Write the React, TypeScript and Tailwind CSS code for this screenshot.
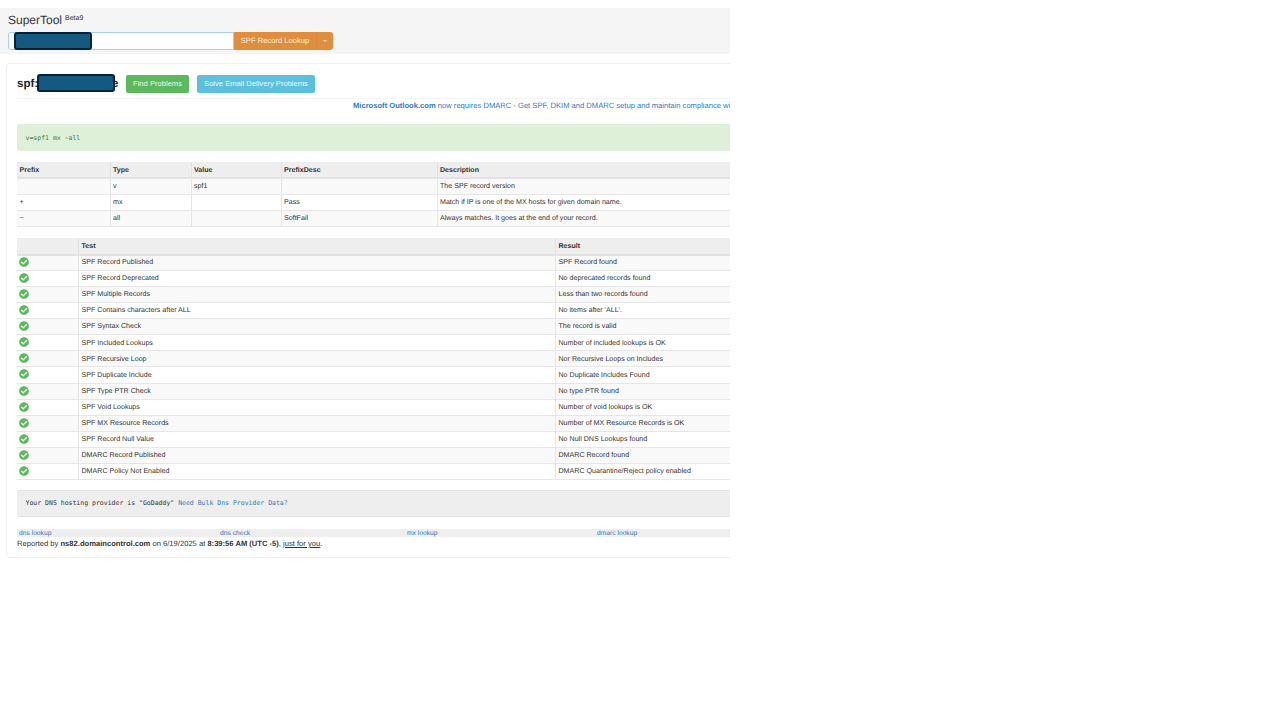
import { FaCheckCircle } from 'react-icons/fa'

const prefixRows = [
  { prefix: '', type: 'v', value: 'spf1', desc: '', description: 'The SPF record version' },
  { prefix: '+', type: 'mx', value: '', desc: 'Pass', description: 'Match if IP is one of the MX hosts for given domain name.' },
  { prefix: '~', type: 'all', value: '', desc: 'SoftFail', description: 'Always matches. It goes at the end of your record.' },
]

const tests = [
  ['SPF Record Published', 'SPF Record found'],
  ['SPF Record Deprecated', 'No deprecated records found'],
  ['SPF Multiple Records', 'Less than two records found'],
  ['SPF Contains characters after ALL', "No items after 'ALL'."],
  ['SPF Syntax Check', 'The record is valid'],
  ['SPF Included Lookups', 'Number of included lookups is OK'],
  ['SPF Recursive Loop', 'Nor Recursive Loops on Includes'],
  ['SPF Duplicate Include', 'No Duplicate Includes Found'],
  ['SPF Type PTR Check', 'No type PTR found'],
  ['SPF Void Lookups', 'Number of void lookups is OK'],
  ['SPF MX Resource Records', 'Number of MX Resource Records is OK'],
  ['SPF Record Null Value', 'No Null DNS Lookups found'],
  ['DMARC Record Published', 'DMARC Record found'],
  ['DMARC Policy Not Enabled', 'DMARC Quarantine/Reject policy enabled'],
]

function Redaction({ className }: { className: string }) {
  return <div className={`absolute h-[18px] w-[78px] rounded-[3px] border-2 border-[#04213a] bg-[#14597f] ${className}`} />
}

export default function App() {
  return (
    <div className="h-[720px] w-[1280px] overflow-hidden bg-white pt-2 font-['Liberation_Sans',Arial,sans-serif] text-[7.6px] text-[#333] opacity-[0.999] [text-rendering:geometricPrecision]">
      <div className="w-[730px] overflow-hidden">
        <header className="h-[46px] bg-[#f5f5f5] pl-2 pt-[3px]">
          <div className="flex h-[21px] items-start">
            <span className="text-[12px] leading-[18px] text-[#333]">SuperTool</span>
            <span className="ml-[3px] mt-[2px] text-[7px] leading-[12px]">Beta9</span>
          </div>
          <div className="relative flex h-[18px] items-stretch">
            <div className="w-[226px] rounded-l-[3px] border border-[#a9cfeb] bg-white" />
            <div className="flex w-[82px] items-center justify-center bg-[#df8e3d] text-[7.6px] text-[#fbeee0]">SPF Record Lookup</div>
            <div className="flex w-[17px] items-center justify-center rounded-r-[3px] border-l border-[#d58a3e] bg-[#df8e3d]">
              <span className="h-0 w-0 border-x-[2px] border-t-[2px] border-x-transparent border-t-[#fbeee0]" />
            </div>
            <Redaction className="left-[6px] top-0" />
          </div>
        </header>

        <main className="mt-[9px] ml-[6px] h-[495px] w-[740px] rounded-[4px] border border-[#f0f0f0] pl-[10px] pr-0">
          <div className="relative flex h-[35px] w-[720px] items-start border-b border-[#f3f3f3] pt-[11px]">
            <h1 className="flex h-[18px] w-[109px] items-center pt-[1px] text-[11.5px] font-bold text-[#222]">
              spf:
              <span className="ml-[74px]">e</span>
            </h1>
            <button className="h-[18px] w-[63px] rounded-[2px] bg-[#5cb85c] text-[7.6px] text-[#eef8ee]">Find Problems</button>
            <button className="ml-[8px] h-[18px] w-[118px] rounded-[2px] bg-[#5bc0de] text-[7.6px] text-[#eef9fc]">Solve Email Delivery Problems</button>
            <Redaction className="left-[20px] top-[10px]" />
          </div>

          <div className="mt-[1px] h-[12px] w-[713px] overflow-hidden whitespace-nowrap pl-[336px] text-[7.6px] leading-[11px] text-[#337ab7]">
            <b>Microsoft Outlook.com</b> now requires DMARC - Get SPF, DKIM and DMARC setup and maintain compliance wi
          </div>

          <div className="mt-[12px] flex h-[27px] w-[720px] items-center rounded-l-[2px] bg-[#dff0d8] pl-[8.5px] pt-[2px] font-['DejaVu_Sans_Mono',monospace] text-[6.5px] text-[#3c763d]">
            v=spf1 mx ~all
          </div>

          <table className="mt-[11px] w-[760px] table-fixed border-collapse text-[7.1px]">
            <colgroup>
              <col className="w-[93px]" />
              <col className="w-[81px]" />
              <col className="w-[90px]" />
              <col className="w-[156px]" />
              <col />
            </colgroup>
            <thead>
              <tr className="h-[16px] border-b-2 border-[#e2e2e2] bg-[#eee] text-left font-bold">
                {['Prefix', 'Type', 'Value', 'PrefixDesc', 'Description'].map((h) => (
                  <th key={h} className="border-l border-[#e2e2e2] pl-[2.5px] pt-[1px] first:border-l-0">{h}</th>
                ))}
              </tr>
            </thead>
            <tbody>
              {prefixRows.map((r, i) => (
                <tr key={i} className={`h-[16px] border-b border-[#e6e6e6] ${i % 2 === 0 ? 'bg-[#f9f9f9]' : 'bg-white'}`}>
                  <td className="pl-[2.5px]">{r.prefix}</td>
                  <td className="border-l border-[#e6e6e6] pl-[2.5px]">{r.type}</td>
                  <td className="border-l border-[#e6e6e6] pl-[2.5px]">{r.value}</td>
                  <td className="border-l border-[#e6e6e6] pl-[2.5px]">{r.desc}</td>
                  <td className="border-l border-[#e6e6e6] pl-[2.5px]">{r.description}</td>
                </tr>
              ))}
            </tbody>
          </table>

          <table className="mt-[11px] w-[760px] table-fixed border-collapse text-[7.1px]">
            <colgroup>
              <col className="w-[61px]" />
              <col className="w-[477px]" />
              <col />
            </colgroup>
            <thead>
              <tr className="h-[17px] border-b-2 border-[#e2e2e2] bg-[#eee] text-left font-bold">
                <th />
                <th className="border-l border-[#e2e2e2] pl-[3px] pt-[1px]">Test</th>
                <th className="border-l border-[#e2e2e2] pl-[3px] pt-[1px]">Result</th>
              </tr>
            </thead>
            <tbody>
              {tests.map(([test, result], i) => (
                <tr key={test} className={`h-[16.07px] border-b border-[#e6e6e6] ${i % 2 === 0 ? 'bg-[#f9f9f9]' : 'bg-white'}`}>
                  <td className="pl-[2px] align-middle">
                    <FaCheckCircle className="-mt-[1px] h-[10px] w-[10px] text-[#5cb85c]" />
                  </td>
                  <td className="border-l border-[#e6e6e6] pl-[3px]">{test}</td>
                  <td className="border-l border-[#e6e6e6] pl-[3px]">{result}</td>
                </tr>
              ))}
            </tbody>
          </table>

          <div className="mt-[10px] flex h-[27px] w-[720px] items-center rounded-l-[2px] border-y border-[#e3e3e3] bg-[#eee] pl-[8.5px] font-['DejaVu_Sans_Mono',monospace] text-[6.5px] text-[#333]">
            <span className="whitespace-pre pt-[1px]">Your DNS hosting provider is "GoDaddy" </span>
            <span className="pt-[1px] text-[#337ab7]">Need Bulk Dns Provider Data?</span>
          </div>

          <div className="mt-[12px] grid h-[8px] w-[720px] grid-cols-[201px_187px_190px_1fr] items-center bg-[#eee] pl-[2px] pt-[1px] text-[6.7px] leading-[8px] text-[#337ab7]">
            <span>dns lookup</span>
            <span>dns check</span>
            <span>mx lookup</span>
            <span>dmarc lookup</span>
          </div>
          <p className="pt-[1px] text-[7.6px] leading-[11px] text-[#333]">
            Reported by <b>ns82.domaincontrol.com</b> on 6/19/2025 at <b>8:39:56 AM (UTC -5)</b>, <span className="underline">just for you</span>.
          </p>
        </main>
      </div>
    </div>
  )
}
